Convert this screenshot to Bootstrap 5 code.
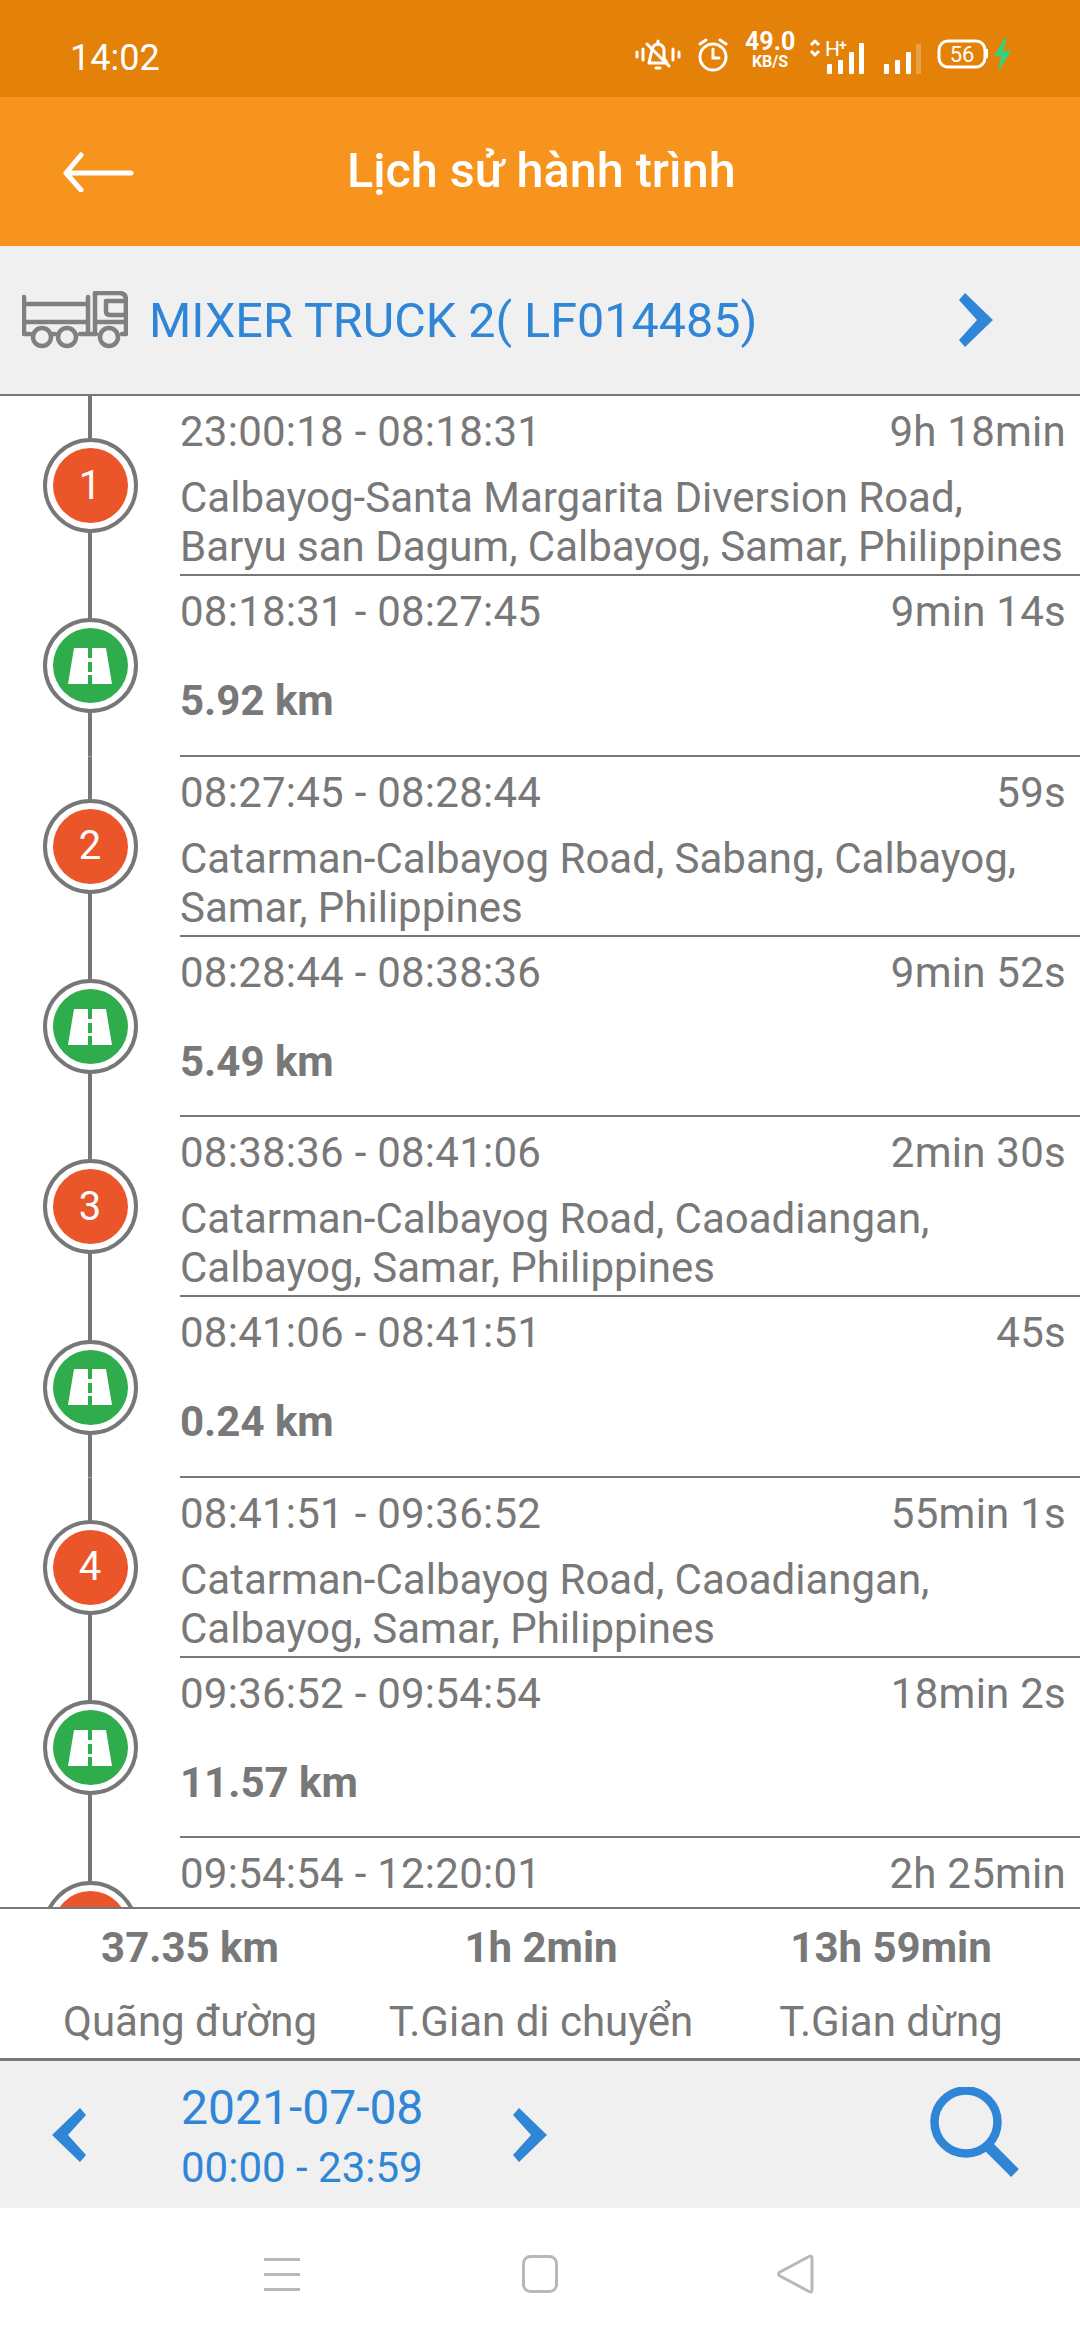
<!doctype html>
<html lang="vi">
<head>
<meta charset="utf-8">
<meta name="viewport" content="width=device-width, initial-scale=1">
<title>Lịch sử hành trình</title>
<link href="https://cdn.jsdelivr.net/npm/bootstrap@5.3.3/dist/css/bootstrap.min.css" rel="stylesheet">
<style>
  html, body { margin: 0; background: #fff; }
  body { font-family: Roboto, "Liberation Sans", sans-serif; color: #787878; }
  .app-shell { width: 1080px; height: 2340px; overflow: hidden; }

  .status-strip { height: 97px; background: #e38108; color: #fff; padding: 38px 65px 0 70px; }
  .status-time { font-size: 36px; line-height: 40px; }
  .speed-box { width: 50px; text-align: center; margin: -8px 14px 0 0; }
  .speed-num { font-size: 25px; font-weight: 700; line-height: 24px; display: block; }
  .speed-unit { font-size: 16px; font-weight: 700; line-height: 15px; display: block; }

  .title-bar { height: 149px; background: #f7941d; color: #fff; padding: 0 0 0 62px; }
  .title-text { font-size: 48.5px; font-weight: 500; margin-left: 213px; }

  .truck-bar { height: 150px; background: #f0f0f0; border-bottom: 2px solid #777; padding: 0 87px 0 22px; }
  .truck-name { font-size: 48.5px; color: #2f86d6; margin-left: 21px; padding-top: 3px; white-space: nowrap; }

  .trip-scroll { height: 1511px; overflow: hidden; }
  .trip-row { height: 180.3px; }
  .trip-rail { width: 180px; background: linear-gradient(#777, #777) no-repeat center / 4px 100%; padding-bottom: 1px; }
  .trip-dot { width: 95px; height: 95px; border: 4px solid #777; border-radius: 50%; background: #fff; padding: 6px; }
  .trip-dot-inner { width: 100%; height: 100%; border-radius: 50%; color: #fff; font-size: 40px; }
  .dot-stop { background: #ea5529; }
  .dot-move { background: #2fac4c; }
  .trip-body { border-bottom: 2px solid #777; padding-right: 14px; font-size: 42px; line-height: 49px; min-width: 0; }
  .trip-time { height: 60px; padding-top: 12px; line-height: 48px; letter-spacing: .25px; }
  .trip-addr { margin-top: 17px; white-space: nowrap; }
  .trip-dist { font-weight: 700; margin-top: 40px; }

  .sum-bar { height: 154px; background: #fff; border-top: 2px solid #777; border-bottom: 3px solid #777; }
  .sum-col { flex: 0 0 auto; }
  .sum-first { width: 380px; }
  .sum-mid { width: 322px; }
  .sum-last { width: 378px; }
  .sum-val { font-weight: 700; font-size: 42px; line-height: 46px; margin-top: 16px; white-space: nowrap; }
  .sum-lbl { font-size: 42px; line-height: 46px; margin-top: 28px; white-space: nowrap; }

  .date-bar { height: 147px; background: #f0f0f0; padding: 0 58px 0 52px; color: #2f86d6; }
  .date-box { width: 240px; margin: 0 92px 0 95px; text-align: center; }
  .date-day { font-size: 48px; line-height: 54px; margin-top: 2px; white-space: nowrap; }
  .date-time { font-size: 42px; line-height: 46px; margin-top: 10px; white-space: nowrap; }

  .nav-strip { height: 132px; background: #fff; padding-left: 264px; }
  .nav-gap-a { margin-right: 222px; }
  .nav-gap-b { margin-right: 219px; }
</style>
</head>
<body>
<div class="app-shell d-flex flex-column">

  <div class="status-strip d-flex align-items-start justify-content-between">
    <div class="status-time">14:02</div>
    <div class="d-flex align-items-start">
      <svg width="46" height="34" viewBox="0 0 46 34" class="me-3" fill="none" stroke="#fff" stroke-width="3" stroke-linecap="round" stroke-linejoin="round">
        <path d="M2 14v5M8 11v11M38 11v11M44 14v5" />
        <path d="M14 25h18l-3-5v-8a6 6 0 0 0-11-3l-2 7z" />
        <path d="M12 6l22 22M21 30h4M23 3v2" />
      </svg>
      <svg width="32" height="34" viewBox="0 0 32 34" class="me-3" fill="none" stroke="#fff" stroke-width="3" stroke-linecap="round">
        <circle cx="16" cy="19" r="13" />
        <path d="M16 11v9h6M3 6l6-4M29 6l-6-4" />
      </svg>
      <div class="speed-box">
        <span class="speed-num">49.0</span>
        <span class="speed-unit">KB/S</span>
      </div>
      <svg width="12" height="20" viewBox="0 0 12 20" class="me-1" fill="none" stroke="#fff" stroke-width="3" stroke-linejoin="round">
        <path d="M2 7l4-4 4 4M2 13l4 4 4-4" />
      </svg>
      <svg width="42" height="36" viewBox="0 0 42 36" class="me-3" fill="#fff">
        <text x="0" y="18" font-family="Roboto, sans-serif" font-size="21">H</text>
        <text x="14" y="12" font-family="Roboto, sans-serif" font-size="14" font-weight="700">+</text>
        <rect x="2" y="26" width="5" height="10" rx="1" />
        <rect x="13" y="22" width="5" height="14" rx="1" />
        <rect x="24" y="14" width="5" height="22" rx="1" />
        <rect x="34" y="5" width="5" height="31" rx="1" />
      </svg>
      <svg width="38" height="30" viewBox="0 0 38 30" class="me-3" style="margin-top:6px" fill="#fff">
        <rect x="1" y="20" width="5" height="10" rx="1" />
        <rect x="12" y="16" width="5" height="14" rx="1" />
        <rect x="23" y="8" width="5" height="22" rx="1" />
        <rect x="33" y="0" width="5" height="30" rx="1" opacity=".25" />
      </svg>
      <svg width="78" height="34" viewBox="0 0 78 34" fill="none">
        <rect x="2" y="3" width="46" height="26" rx="9" stroke="#fff" stroke-width="3" />
        <rect x="49" y="11" width="2" height="9" fill="#fff" />
        <text x="25" y="24" text-anchor="middle" font-family="Roboto, sans-serif" font-size="22" fill="#fff">56</text>
        <path d="M68 0l-11 18h7l-3 16 13-21h-8l4-13z" fill="#34d27e" />
      </svg>
    </div>
  </div>

  <div class="title-bar d-flex align-items-center">
    <svg width="72" height="40" viewBox="0 0 72 40" fill="none" stroke="#fff" stroke-width="5" stroke-linecap="round" stroke-linejoin="round">
      <path d="M69 21H5M19 3L4 21l15 17" />
    </svg>
    <div class="title-text">Lịch sử hành trình</div>
  </div>

  <div class="truck-bar d-flex align-items-center">
    <svg width="106" height="58" viewBox="0 0 106 58" fill="none" stroke="#808080" stroke-width="4.5" stroke-linejoin="round" stroke-linecap="round">
      <path d="M2 6v37h6M2 13h64M2 31h64M66 6v37h-8M31 43h2M66 43h8" />
      <path d="M73 40V2h24q7 0 7 7v34h-4" />
      <path d="M84 10h20v14H88q-4 0-4-4z" />
      <path d="M73 31h31" />
      <circle cx="20" cy="46" r="9" /><circle cx="45" cy="46" r="9" /><circle cx="87" cy="46" r="9" />
    </svg>
    <div class="truck-name flex-grow-1">MIXER TRUCK 2( LF014485)</div>
    <svg width="34" height="54" viewBox="0 0 34 54" fill="#2f86d6"><path d="M0 7l6-7 28 27L6 54l-6-7 18-20z" /></svg>
  </div>

  <div class="trip-scroll">
    <div class="trip-row d-flex">
      <div class="trip-rail d-flex align-items-center justify-content-center flex-shrink-0">
        <div class="trip-dot"><div class="trip-dot-inner dot-stop d-flex align-items-center justify-content-center">1</div></div>
      </div>
      <div class="trip-body flex-grow-1">
        <div class="trip-time d-flex justify-content-between"><span>23:00:18 - 08:18:31</span><span>9h 18min</span></div>
        <div class="trip-addr">Calbayog-Santa Margarita Diversion Road,<br>Baryu san Dagum, Calbayog, Samar, Philippines</div>
      </div>
    </div>
    <div class="trip-row d-flex">
      <div class="trip-rail d-flex align-items-center justify-content-center flex-shrink-0">
        <div class="trip-dot"><div class="trip-dot-inner dot-move d-flex align-items-center justify-content-center"><svg width="44" height="36" viewBox="0 0 44 36" fill="#fff"><path d="M6 0h14v10h4V0h14l6 36H24v-9h-4v9H0zM20 14v10h4V14z" /></svg></div></div>
      </div>
      <div class="trip-body flex-grow-1">
        <div class="trip-time d-flex justify-content-between"><span>08:18:31 - 08:27:45</span><span>9min 14s</span></div>
        <div class="trip-dist">5.92 km</div>
      </div>
    </div>
    <div class="trip-row d-flex">
      <div class="trip-rail d-flex align-items-center justify-content-center flex-shrink-0">
        <div class="trip-dot"><div class="trip-dot-inner dot-stop d-flex align-items-center justify-content-center">2</div></div>
      </div>
      <div class="trip-body flex-grow-1">
        <div class="trip-time d-flex justify-content-between"><span>08:27:45 - 08:28:44</span><span>59s</span></div>
        <div class="trip-addr">Catarman-Calbayog Road, Sabang, Calbayog,<br>Samar, Philippines</div>
      </div>
    </div>
    <div class="trip-row d-flex">
      <div class="trip-rail d-flex align-items-center justify-content-center flex-shrink-0">
        <div class="trip-dot"><div class="trip-dot-inner dot-move d-flex align-items-center justify-content-center"><svg width="44" height="36" viewBox="0 0 44 36" fill="#fff"><path d="M6 0h14v10h4V0h14l6 36H24v-9h-4v9H0zM20 14v10h4V14z" /></svg></div></div>
      </div>
      <div class="trip-body flex-grow-1">
        <div class="trip-time d-flex justify-content-between"><span>08:28:44 - 08:38:36</span><span>9min 52s</span></div>
        <div class="trip-dist">5.49 km</div>
      </div>
    </div>
    <div class="trip-row d-flex">
      <div class="trip-rail d-flex align-items-center justify-content-center flex-shrink-0">
        <div class="trip-dot"><div class="trip-dot-inner dot-stop d-flex align-items-center justify-content-center">3</div></div>
      </div>
      <div class="trip-body flex-grow-1">
        <div class="trip-time d-flex justify-content-between"><span>08:38:36 - 08:41:06</span><span>2min 30s</span></div>
        <div class="trip-addr">Catarman-Calbayog Road, Caoadiangan,<br>Calbayog, Samar, Philippines</div>
      </div>
    </div>
    <div class="trip-row d-flex">
      <div class="trip-rail d-flex align-items-center justify-content-center flex-shrink-0">
        <div class="trip-dot"><div class="trip-dot-inner dot-move d-flex align-items-center justify-content-center"><svg width="44" height="36" viewBox="0 0 44 36" fill="#fff"><path d="M6 0h14v10h4V0h14l6 36H24v-9h-4v9H0zM20 14v10h4V14z" /></svg></div></div>
      </div>
      <div class="trip-body flex-grow-1">
        <div class="trip-time d-flex justify-content-between"><span>08:41:06 - 08:41:51</span><span>45s</span></div>
        <div class="trip-dist">0.24 km</div>
      </div>
    </div>
    <div class="trip-row d-flex">
      <div class="trip-rail d-flex align-items-center justify-content-center flex-shrink-0">
        <div class="trip-dot"><div class="trip-dot-inner dot-stop d-flex align-items-center justify-content-center">4</div></div>
      </div>
      <div class="trip-body flex-grow-1">
        <div class="trip-time d-flex justify-content-between"><span>08:41:51 - 09:36:52</span><span>55min 1s</span></div>
        <div class="trip-addr">Catarman-Calbayog Road, Caoadiangan,<br>Calbayog, Samar, Philippines</div>
      </div>
    </div>
    <div class="trip-row d-flex">
      <div class="trip-rail d-flex align-items-center justify-content-center flex-shrink-0">
        <div class="trip-dot"><div class="trip-dot-inner dot-move d-flex align-items-center justify-content-center"><svg width="44" height="36" viewBox="0 0 44 36" fill="#fff"><path d="M6 0h14v10h4V0h14l6 36H24v-9h-4v9H0zM20 14v10h4V14z" /></svg></div></div>
      </div>
      <div class="trip-body flex-grow-1">
        <div class="trip-time d-flex justify-content-between"><span>09:36:52 - 09:54:54</span><span>18min 2s</span></div>
        <div class="trip-dist">11.57 km</div>
      </div>
    </div>
    <div class="trip-row d-flex">
      <div class="trip-rail d-flex align-items-center justify-content-center flex-shrink-0">
        <div class="trip-dot"><div class="trip-dot-inner dot-stop"></div></div>
      </div>
      <div class="trip-body flex-grow-1">
        <div class="trip-time d-flex justify-content-between"><span>09:54:54 - 12:20:01</span><span>2h 25min</span></div>
      </div>
    </div>
  </div>

  <div class="sum-bar d-flex text-center">
    <div class="sum-col sum-first"><div class="sum-val">37.35 km</div><div class="sum-lbl">Quãng đường</div></div>
    <div class="sum-col sum-mid"><div class="sum-val">1h 2min</div><div class="sum-lbl">T.Gian di chuyển</div></div>
    <div class="sum-col sum-last"><div class="sum-val">13h 59min</div><div class="sum-lbl">T.Gian dừng</div></div>
  </div>

  <div class="date-bar d-flex align-items-center">
    <svg width="34" height="54" viewBox="0 0 34 54" fill="#2f86d6"><path d="M34 7l-6-7L0 27l28 27 6-7-18-20z" /></svg>
    <div class="date-box">
      <div class="date-day">2021-07-08</div>
      <div class="date-time">00:00 - 23:59</div>
    </div>
    <svg width="34" height="54" viewBox="0 0 34 54" fill="#2f86d6"><path d="M0 7l6-7 28 27L6 54l-6-7 18-20z" /></svg>
    <svg width="92" height="96" viewBox="0 0 92 96" class="ms-auto" fill="none" stroke="#2f86d6">
      <circle cx="36" cy="35" r="31.5" stroke-width="8.5" />
      <path d="M59 60l26 26" stroke-width="11" />
    </svg>
  </div>

  <div class="nav-strip d-flex align-items-center">
    <svg width="36" height="34" viewBox="0 0 36 34" fill="#b8b8b8" class="nav-gap-a">
      <rect y="1" width="36" height="3" /><rect y="16" width="36" height="3" /><rect y="31" width="36" height="3" />
    </svg>
    <svg width="36" height="38" viewBox="0 0 36 38" fill="none" stroke="#b8b8b8" stroke-width="3" class="nav-gap-b">
      <rect x="1.5" y="1.5" width="33" height="35" rx="7" />
    </svg>
    <svg width="37" height="40" viewBox="0 0 37 40" fill="none" stroke="#b8b8b8" stroke-width="3" stroke-linejoin="round">
      <path d="M35 4q0-3-3-1.500L3 18q-3 2 0 4l29 15.500q3 1.500 3-1.500z" />
    </svg>
  </div>

</div>
<script src="https://cdn.jsdelivr.net/npm/bootstrap@5.3.3/dist/js/bootstrap.bundle.min.js"></script>
</body>
</html>
